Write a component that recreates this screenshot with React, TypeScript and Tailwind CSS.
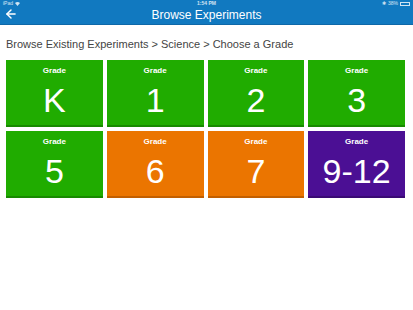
import { ArrowLeft } from 'lucide-react';

type Tile = { label: string; color: string };

const tiles: Tile[] = [
  { label: 'K', color: 'bg-[#20ac00] border-[#188a00]' },
  { label: '1', color: 'bg-[#20ac00] border-[#188a00]' },
  { label: '2', color: 'bg-[#20ac00] border-[#188a00]' },
  { label: '3', color: 'bg-[#20ac00] border-[#188a00]' },
  { label: '5', color: 'bg-[#20ac00] border-[#188a00]' },
  { label: '6', color: 'bg-[#eb7500] border-[#c25f00]' },
  { label: '7', color: 'bg-[#eb7500] border-[#c25f00]' },
  { label: '9-12', color: 'bg-[#4b0f94] border-[#3a0a74]' },
];

function StatusBar() {
  return (
    <div className="relative flex h-[7px] items-center px-[3px] text-[5px] leading-none text-white/80">
      <span className="flex items-center gap-[2px]">
        iPad
        <svg width="5" height="4" viewBox="0 0 10 8">
          <path d="M5 8 L0 2 Q5 -2 10 2 Z" fill="currentColor" />
        </svg>
      </span>
      <span className="absolute left-1/2 -translate-x-1/2 font-bold">1:54 PM</span>
      <span className="ml-auto flex items-center gap-[2px]">
        <span>✱</span>
        <span>38%</span>
        <span className="flex h-[4px] w-[10px] items-center border border-white/80 p-[1px]">
          <span className="h-full w-[35%] bg-white/80" />
        </span>
      </span>
    </div>
  );
}

export default function App() {
  return (
    <div
      className="h-[310px] w-[413px] bg-white"
      style={{ fontFamily: '"Liberation Sans", Arial, sans-serif' }}
    >
      <header className="h-[25px] bg-[#1179c0] border-b border-[#0e68a8]">
        <StatusBar />
        <div className="relative flex h-[17px] items-center justify-center">
          <ArrowLeft className="absolute left-[4px] top-[0px] h-[14px] w-[14px] text-white" strokeWidth={2.5} />
          <h1 className="text-[12px] leading-none text-white -mt-[1px]">Browse Experiments</h1>
        </div>
      </header>

      <p className="mt-[14px] px-[6px] text-[11px] leading-none text-[#444]">
        Browse Existing Experiments &gt; Science &gt; Choose a Grade
      </p>

      <div className="mt-[10px] grid grid-cols-4 gap-x-[4px] gap-y-[4px] pl-[6px] pr-[8px]">
        {tiles.map((t) => (
          <div
            key={t.label}
            className={`flex h-[67px] flex-col items-center border-b-2 pt-[7px] text-white ${t.color}`}
          >
            <span className="text-[8px] font-bold leading-none">Grade</span>
            <span className="mt-[8px] text-[34px] leading-none">{t.label}</span>
          </div>
        ))}
      </div>
    </div>
  );
}
